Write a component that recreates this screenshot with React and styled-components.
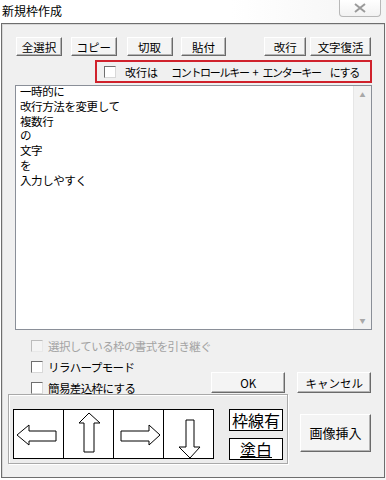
import React from "react";
import styled, { createGlobalStyle } from "styled-components";

const GlobalStyle = createGlobalStyle`
  html, body {
    margin: 0;
    padding: 0;
    background: #ffffff;
  }
  body {
    font-family: "Noto Sans CJK JP", "DejaVu Sans", sans-serif;
    font-size: 12px;
    color: #000;
  }
`;

const toolButtons = [
  { label: "全選択", width: 46, ml: 0 },
  { label: "コピー", width: 46, ml: 9 },
  { label: "切取", width: 46, ml: 10 },
  { label: "貼付", width: 46, ml: 8 },
  { label: "改行", width: 42, ml: 38 },
  { label: "文字復活", width: 61, ml: 4 }
];

const noticeParts = [
  { text: "改行は", ml: 4, wide: true },
  { text: "コントロールキー", ml: 13 },
  { text: "+", ml: 4 },
  { text: "エンターキー", ml: 5 },
  { text: "にする", ml: 9 }
];

const textLines = ["一時的に", "改行方法を変更して", "複数行", "の", "文字", "を", "入力しやすく"];

function Arrow({ dir }) {
  const shapes = {
    left: "3,25 15,15 15,21 42,21 42,31 15,31 15,35",
    up: "25,3 36,13 30,13 30,42 20,42 20,13 15,13",
    right: "46,25 35,15 35,21 7,21 7,31 35,31 35,35",
    down: "26,48 36,37 30,37 30,10 22,10 22,37 15,37"
  };
  return (
    <svg width="49" height="49" viewBox="0 0 49 49">
      <polygon points={shapes[dir]} fill="#fff" stroke="#000" strokeWidth="1" strokeLinejoin="miter" />
    </svg>
  );
}

function Check({ label, disabled }) {
  return (
    <CheckRow $disabled={disabled}>
      <CheckBox $disabled={disabled} />
      <span>{label}</span>
    </CheckRow>
  );
}

export default function App() {
  return (
    <>
      <GlobalStyle />
      <Window>
        <TitleBar>
          <span>新規枠作成</span>
          <CloseButton>
            <svg width="12" height="10" viewBox="0 0 12 10">
              <path d="M1 1 L11 9 M11 1 L1 9" stroke="#9a9a9a" strokeWidth="2" fill="none" />
            </svg>
          </CloseButton>
        </TitleBar>
        <Client>
          <Toolbar>
            {toolButtons.map((b) => (
              <ToolButton key={b.label} $width={b.width} $ml={b.ml}>
                {b.label}
              </ToolButton>
            ))}
          </Toolbar>

          <NoticeBox>
            <CheckBox />
            {noticeParts.map((p) => (
              <NoticeText key={p.text} $ml={p.ml} $wide={p.wide}>
                {p.text}
              </NoticeText>
            ))}
          </NoticeBox>

          <Editor>
            <EditorText>
              {textLines.map((l) => (
                <EditorLine key={l}>{l}</EditorLine>
              ))}
            </EditorText>
            <ScrollBar>
              <ScrollArrow>▲</ScrollArrow>
              <ScrollArrow>▼</ScrollArrow>
            </ScrollBar>
          </Editor>

          <OptionsRow>
            <CheckList>
              <Check label="選択している枠の書式を引き継ぐ" disabled />
              <Check label="リラハープモード" />
              <Check label="簡易差込枠にする" />
            </CheckList>
            <DialogButtons>
              <DialogButton>OK</DialogButton>
              <DialogButton>キャンセル</DialogButton>
            </DialogButtons>
          </OptionsRow>

          <BottomRow>
            <GroupPanel>
              <ArrowStrip>
                <ArrowCell><Arrow dir="left" /></ArrowCell>
                <ArrowCell><Arrow dir="up" /></ArrowCell>
                <ArrowCell><Arrow dir="right" /></ArrowCell>
                <ArrowCell $last><Arrow dir="down" /></ArrowCell>
              </ArrowStrip>
              <ToggleColumn>
                <ToggleBox>枠線有</ToggleBox>
                <ToggleBox $underline>塗白</ToggleBox>
              </ToggleColumn>
            </GroupPanel>
            <ImageButton>画像挿入</ImageButton>
          </BottomRow>
        </Client>
      </Window>
    </>
  );
}

const Window = styled.div`
  width: 386px;
  height: 480px;
  display: flex;
  flex-direction: column;
  background: linear-gradient(to right, #ffffff 0%, #ffffff 60%, #f4f4f4 100%);
  overflow: hidden;
`;

const TitleBar = styled.div`
  height: 22px;
  display: flex;
  align-items: center;
  justify-content: space-between;
  padding-left: 2px;
  font-size: 12px;
  line-height: 14px;
`;

const CloseButton = styled.div`
  width: 42px;
  height: 17px;
  margin-top: -6px;
  margin-right: 5px;
  border: 1px solid #b8b8b8;
  border-top: none;
  border-radius: 0 0 4px 4px;
  background: linear-gradient(#ffffff, #f2f2f2);
  display: flex;
  align-items: flex-end;
  justify-content: center;
  padding-bottom: 3px;
  box-sizing: border-box;
`;

const Client = styled.div`
  flex: 1;
  margin: 1px 1px 2px 1px;
  border: 1px solid #6e6e6e;
  box-shadow: inset 1px 1px 0 #d8d8d8;
  background: #f0f0f0;
  display: flex;
  flex-direction: column;
  padding: 13px 13px 0 6px;
`;

const Toolbar = styled.div`
  display: flex;
  padding-left: 8px;
  height: 19px;
`;

const ToolButton = styled.div`
  width: ${(p) => p.$width}px;
  margin-left: ${(p) => p.$ml}px;
  height: 19px;
  box-sizing: border-box;
  background: #f4f4f4;
  border-top: 1px solid #ffffff;
  border-left: 1px solid #ffffff;
  border-right: 1px solid #6a6a6a;
  border-bottom: 1px solid #6a6a6a;
  box-shadow: inset -1px -1px 0 #b4b4b4;
  display: flex;
  align-items: center;
  justify-content: center;
  font-size: 11.5px;
  line-height: 14px;
  white-space: nowrap;
`;

const NoticeBox = styled.div`
  margin: 4px 0 0 87px;
  width: 277px;
  height: 23px;
  box-sizing: border-box;
  border: 2px solid #d0222c;
  display: flex;
  align-items: center;
  padding-left: 7px;
  line-height: 14px;
  overflow: hidden;
`;

const NoticeText = styled.span`
  margin-left: ${(p) => p.$ml}px;
  white-space: nowrap;
  font-size: 11px;
  letter-spacing: ${(p) => (p.$wide ? "0" : "-1.3px")};
`;

const Editor = styled.div`
  margin: 2px 0 0 7px;
  width: 357px;
  height: 245px;
  box-sizing: border-box;
  border: 1px solid #8a8f98;
  background: #ffffff;
  display: flex;
`;

const EditorText = styled.div`
  flex: 1;
  padding: 0 0 0 4px;
`;

const EditorLine = styled.div`
  height: 14.8px;
  font-size: 11.5px;
  line-height: 11px;
  letter-spacing: -0.4px;
  white-space: nowrap;
`;

const ScrollBar = styled.div`
  width: 17px;
  background: #f2f2f2;
  border-left: 1px solid #e6e6e6;
  display: flex;
  flex-direction: column;
  justify-content: space-between;
  align-items: center;
  padding: 5px 0 4px;
`;

const ScrollArrow = styled.span`
  font-size: 6px;
  line-height: 8px;
  color: #a8a8a8;
`;

const OptionsRow = styled.div`
  display: flex;
  height: 56px;
  margin-top: 9px;
`;

const CheckList = styled.div`
  display: flex;
  flex-direction: column;
  padding-left: 23px;
  gap: 7px;
  width: 181px;
`;

const CheckRow = styled.div`
  display: flex;
  align-items: center;
  height: 14px;
  font-size: 11.5px;
  line-height: 14px;
  letter-spacing: -0.6px;
  white-space: nowrap;
  color: ${(p) => (p.$disabled ? "#a3a3a3" : "#000")};
`;

const CheckBox = styled.span`
  width: 12px;
  height: 12px;
  box-sizing: border-box;
  flex-shrink: 0;
  margin-right: 5px;
  background: ${(p) => (p.$disabled ? "#f4f4f4" : "#ffffff")};
  border-top: 1px solid ${(p) => (p.$disabled ? "#bcbcbc" : "#6f6f6f")};
  border-left: 1px solid ${(p) => (p.$disabled ? "#bcbcbc" : "#6f6f6f")};
  border-right: 1px solid ${(p) => (p.$disabled ? "#e8e8e8" : "#d8d8d8")};
  border-bottom: 1px solid ${(p) => (p.$disabled ? "#e8e8e8" : "#d8d8d8")};
`;

const DialogButtons = styled.div`
  display: flex;
  align-items: flex-end;
  gap: 12px;
  padding-bottom: 2px;
`;

const DialogButton = styled(ToolButton)`
  width: 74px;
  height: 21px;
`;

const BottomRow = styled.div`
  display: flex;
  align-items: flex-start;
  margin-top: -1px;
`;

const GroupPanel = styled.div`
  width: 280px;
  height: 70px;
  box-sizing: border-box;
  border: 1px solid #a9a9a9;
  box-shadow: inset 1px 1px 0 #ffffff, 1px 1px 0 #ffffff;
  background: #ececec;
  display: flex;
  align-items: flex-start;
  padding: 14px 0 0 4px;
`;

const ArrowStrip = styled.div`
  display: flex;
  border: 1px solid #000;
  background: #ffffff;
  height: 50px;
  box-sizing: border-box;
`;

const ArrowCell = styled.div`
  width: 49px;
  height: 48px;
  border-right: ${(p) => (p.$last ? "none" : "1px solid #000")};
  display: flex;
  align-items: flex-start;
  justify-content: flex-start;
  overflow: hidden;
`;

const ToggleColumn = styled.div`
  display: flex;
  flex-direction: column;
  gap: 7px;
  margin-left: 15px;
`;

const ToggleBox = styled.div`
  width: 54px;
  height: 22px;
  box-sizing: border-box;
  border: 1px solid #000;
  background: #ffffff;
  display: flex;
  align-items: center;
  justify-content: center;
  font-size: 16px;
  line-height: 18px;
  text-decoration: ${(p) => (p.$underline ? "underline" : "none")};
  text-underline-offset: 1px;
`;

const ImageButton = styled(ToolButton)`
  width: 71px;
  height: 38px;
  margin-left: 12px;
  margin-top: 20px;
  font-size: 13px;
`;
